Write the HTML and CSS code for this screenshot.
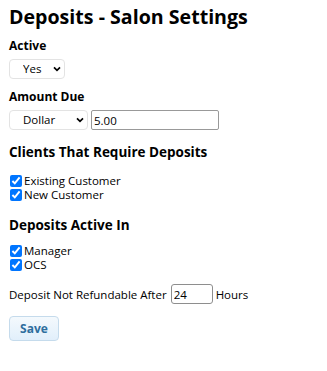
FILE: index.html
```html
<!DOCTYPE html>
<html>
<head>
<meta charset="utf-8">
<link rel="stylesheet" href="styles.css">
</head>
<body>
<div class="page">
  <h1 class="title">Deposits - Salon Settings</h1>
  <div class="label">Active</div>
  <div class="row">
    <select class="sel sel-yes"><option>Yes</option><option>No</option></select>
  </div>
  <div class="label label-amount">Amount Due</div>
  <div class="row">
    <select class="sel sel-dollar"><option>Dollar</option><option>Percent</option></select>
    <input class="txt txt-amount" type="text" value="5.00">
  </div>
  <h2 class="section">Clients That Require Deposits</h2>
  <div class="checks">
    <label class="chk"><input type="checkbox" checked>Existing Customer</label>
    <label class="chk"><input type="checkbox" checked>New Customer</label>
  </div>
  <h2 class="section section-active">Deposits Active In</h2>
  <div class="checks checks-active">
    <label class="chk"><input type="checkbox" checked>Manager</label>
    <label class="chk"><input type="checkbox" checked>OCS</label>
  </div>
  <div class="refund"><span>Deposit Not Refundable After</span><input class="txt txt-hours" type="text" value="24"><span>Hours</span></div>
  <button class="save">Save</button>
</div>
</body>
</html>
```

FILE: styles.css
```css
html, body { margin: 0; padding: 0; background: #fff; }
body { font-family: "Open Sans", "Noto Sans", sans-serif; color: #000; font-size: 11.5px; }
.page { padding: 3px 9px 0; display: flex; flex-direction: column; align-items: flex-start; }
.title { font-size: 19.6px; font-weight: 700; margin: 0; line-height: 27px; height: 27px; }
.label { font-weight: 700; font-size: 12px; margin-top: 8px; line-height: 16px; height: 16px; }
.label-amount { margin-top: 10px; }
.row { display: flex; align-items: center; gap: 3px; margin-top: 5px; height: 20px; }
.sel {
  appearance: none; -webkit-appearance: none;
  height: 20px; box-sizing: border-box; border: 1px solid #e3e3e3; border-radius: 4px; background-color: #fff;
  font-family: "Open Sans", sans-serif; font-size: 11.5px; color: #000;
  padding: 0 12px 0 13px; text-align: left; line-height: 18px;
  background-image: url("data:image/svg+xml;utf8,<svg xmlns='http://www.w3.org/2000/svg' width='8' height='6' viewBox='0 0 8 6'><path d='M1 1.3l3 3 3-3' fill='none' stroke='black' stroke-width='1.7'/></svg>");
  background-repeat: no-repeat; background-position: right 3px center;
}
.sel-yes { width: 56px; }
.sel-dollar { width: 79px; }
.txt {
  height: 20px; box-sizing: border-box; border: 1px solid #999; border-radius: 2px;
  font-family: "Open Sans", sans-serif; font-size: 11.5px; padding: 0 2px; color: #000; margin: 0;
}
.txt-amount { width: 128px; }
.section { font-size: 13.5px; font-weight: 700; margin: 13px 0 0; line-height: 18px; height: 18px; }
.section-active { margin-top: 14px; }
.checks { display: flex; flex-direction: column; margin-top: 13px; }
.checks-active { margin-top: 10px; }
.chk { display: flex; align-items: center; line-height: 14px; height: 14px; font-size: 11.5px; }
.chk input { margin: 0 2px 0 1px; width: 12px; height: 12px; accent-color: #0075ff; }
.refund { display: flex; align-items: center; margin-top: 12px; font-size: 11.5px; height: 20px; }
.txt-hours { width: 42px; border-radius: 3px; margin: 0 3px 0 4px; border-color: #8e8e8e; }
.save {
  margin-top: 12px; width: 50px; height: 25px; border: 1px solid #c5dbec; border-radius: 4px;
  background: linear-gradient(#f4f9fd, #e1effb); color: #2e6e9e; font-weight: 700;
  font-family: "Open Sans", sans-serif; font-size: 12px; padding: 0;
}
```
